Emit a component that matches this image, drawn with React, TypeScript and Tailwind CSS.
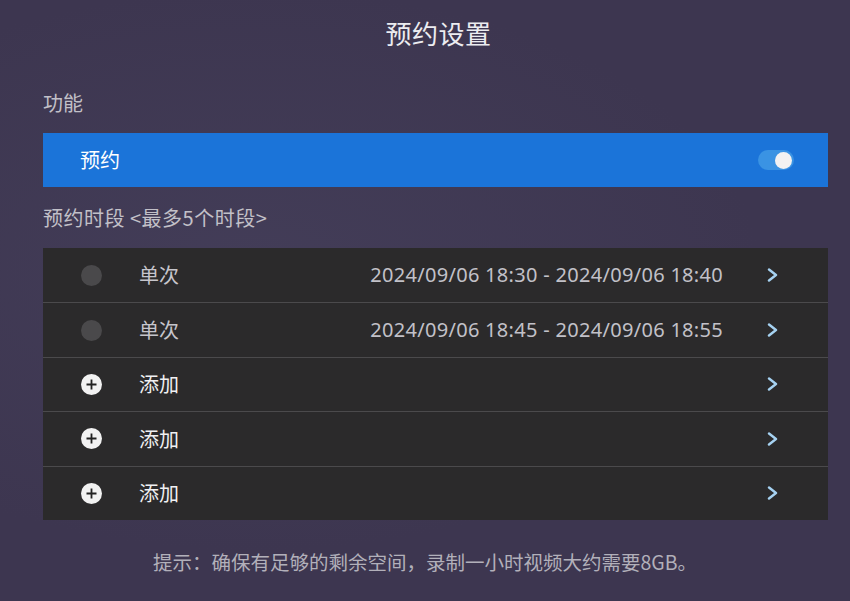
import React, { useState } from "react";

const slots = [
  { type: "once", label: "单次", range: "2024/09/06 18:30 - 2024/09/06 18:40" },
  { type: "once", label: "单次", range: "2024/09/06 18:45 - 2024/09/06 18:55" },
  { type: "add", label: "添加", range: "" },
  { type: "add", label: "添加", range: "" },
  { type: "add", label: "添加", range: "" },
];

const cjk = { fontFamily: '"Noto Sans CJK SC", "Noto Sans", sans-serif' };

function Chevron() {
  return (
    <svg width="13" height="14" viewBox="0 0 13 14" fill="none">
      <path
        d="M3 1.5 L10 7 L3 12.5"
        stroke="#a6d2f2"
        strokeWidth="2.4"
        strokeLinecap="round"
        strokeLinejoin="round"
      />
    </svg>
  );
}

function PlusIcon() {
  return (
    <svg width="21" height="21" viewBox="0 0 21 21">
      <circle cx="10.5" cy="10.5" r="10.5" fill="#f2f2f2" />
      <path d="M10.5 5.5 V15.5 M5.5 10.5 H15.5" stroke="#222" strokeWidth="1.8" />
    </svg>
  );
}

export default function App() {
  const [enabled, setEnabled] = useState(true);

  return (
    <div
      className="w-[850px] h-[601px] overflow-hidden bg-[#3d3650] bg-[radial-gradient(ellipse_at_30%_45%,#433d58_0%,#3d3650_60%)]"
      style={cjk}
    >
      <div className="ml-[43px] w-[785px] flex flex-col">
        {/* Header */}
        <div className="h-[64px] flex items-center justify-center text-[26px] text-[#ececf0] pt-[1px] pl-[6px] tracking-[0.5px]">
          预约设置
        </div>

        {/* Function */}
        <div className="mt-[27px] leading-[24px] text-[20px] text-[#c2c0c8]">功能</div>
        <div className="mt-[18px] h-[54px] bg-[#1b74d9] flex items-center pl-[37px] pr-[34px]">
          <span className="text-[20px] text-white">预约</span>
          <button
            onClick={() => setEnabled(!enabled)}
            className="ml-auto w-[36px] h-[20px] rounded-full bg-[#3a93e3] flex items-center justify-end pr-[2px]"
          >
            <span className="w-[17px] h-[17px] rounded-full bg-[#f2f2f2]" />
          </button>
        </div>

        {/* Slots */}
        <div className="mt-[19px] leading-[24px] text-[20px] text-[#c2c0c8] tracking-[0.5px]">
          预约时段 &lt;最多5个时段&gt;
        </div>
        <div className="mt-[18px] bg-[#2b2a2b]">
          {slots.map((slot, i) => (
            <div
              key={i}
              className={`h-[54.4px] flex items-center pl-[38px] pr-[49px] ${
                i > 0 ? "border-t border-[#4b4a4c]" : ""
              }`}
            >
              <div className="w-[21px] h-[21px] flex items-center justify-center">
                {slot.type === "add" ? (
                  <PlusIcon />
                ) : (
                  <span className="w-[21px] h-[21px] rounded-full bg-[#4a494b]" />
                )}
              </div>
              <span
                className={`ml-[37px] text-[20px] ${
                  slot.type === "add" ? "text-[#f0f0f2]" : "text-[#c6c5cc]"
                }`}
              >
                {slot.label}
              </span>
              {slot.range && (
                <span
                  className="ml-auto mr-[43px] text-[20px] text-[#c2c1c8] tracking-[0.3px]"
                  style={{ fontFamily: '"Noto Sans", sans-serif' }}
                >
                  {slot.range}
                </span>
              )}
              <span className={slot.range ? "" : "ml-auto"}>
                <Chevron />
              </span>
            </div>
          ))}
        </div>
      </div>

      {/* Hint */}
      <div className="mt-[30px] leading-[24px] text-center text-[19.5px] text-[#b2b0ba]">
        提示：确保有足够的剩余空间，录制一小时视频大约需要8GB。
      </div>
    </div>
  );
}
